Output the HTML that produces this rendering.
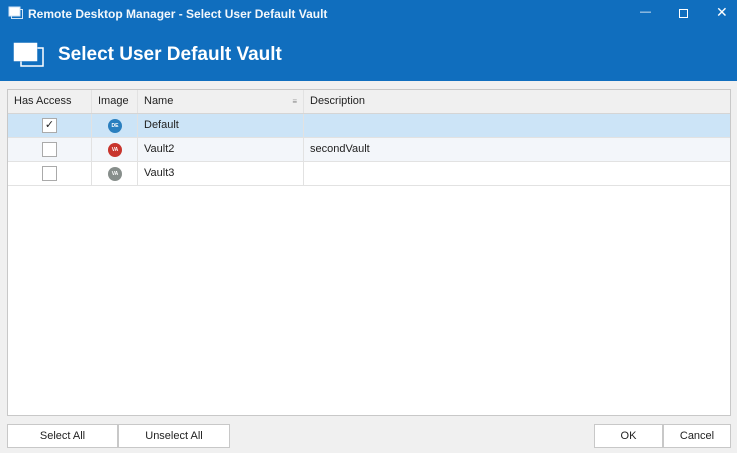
<!DOCTYPE html><html><head><style>
body{margin:0;width:737px;height:453px;background:#f0f0f0;font-family:"Liberation Sans",sans-serif;font-size:11px;color:#222;position:relative;overflow:hidden}
.top{position:absolute;left:0;top:0;width:737px;height:81px;background:#106ebe}
.t{position:absolute;color:#fff}
.grid{position:absolute;left:7px;top:89px;width:722px;height:325px;background:#fff;border:1px solid #c8c8c8}
.row{position:absolute;left:0;width:722px;height:23px;border-bottom:1px solid #e2e2e2}
.c{position:absolute;top:0;height:23px;line-height:23px;border-right:1px solid #e2e2e2;box-sizing:border-box;padding-left:6px}
.cb{position:absolute;left:34px;top:4px;width:13px;height:13px;border:1px solid #aaa;background:#fff;font-size:11px;line-height:13px;text-align:center}
.dot{position:absolute;left:16px;top:5px;width:14px;height:14px;border-radius:50%;color:#fff;font-size:5px;line-height:14px;text-align:center;font-weight:bold}
.btn{position:absolute;top:424px;height:22px;border:1px solid #c8c8c8;background:#fff;line-height:22px;text-align:center;font-size:11px}
</style></head><body>
<div class="top"></div>
<svg style="position:absolute;left:8px;top:6px" width="16" height="14"><rect x="3.5" y="3.5" width="11" height="9" fill="none" stroke="#cfe3f5"/><rect x="1" y="1" width="11" height="9" fill="#fff" stroke="#cfe3f5"/></svg>
<div class="t" style="left:28px;top:7px;font-size:12px;font-weight:bold;opacity:.95">Remote Desktop Manager - Select User Default Vault</div>
<div class="t" style="left:640px;top:6px;font-size:11px">&#8212;</div>
<div style="position:absolute;left:679px;top:9px;width:7px;height:7px;border:1px solid #fff"></div>
<div class="t" style="left:716px;top:4px;font-size:14px">&#x2715;</div>
<svg style="position:absolute;left:13px;top:42px" width="32" height="26"><rect x="8" y="6" width="22" height="18" fill="none" stroke="#fff" stroke-width="1.5"/><rect x="1" y="1" width="23" height="18" fill="#fff" stroke="#106ebe" stroke-width="1"/><rect x="1.5" y="1.5" width="22" height="17" fill="none" stroke="#fff" stroke-width="1.5"/><rect x="4" y="4" width="17" height="12" fill="#fff"/></svg>
<div class="t" style="left:58px;top:44px;font-size:19px;font-weight:bold">Select User Default Vault</div>
<div class="grid">
<div class="row" style="top:0;background:#f0f0f0;border-bottom:1px solid #d5d5d5">
<div class="c" style="left:0;width:84px">Has Access</div><div class="c" style="left:84px;width:46px">Image</div><div class="c" style="left:130px;width:166px">Name<span style="position:absolute;right:6px;font-size:8px;color:#888">&#8801;</span></div><div class="c" style="left:296px;width:426px;border:0">Description</div></div>
<div class="row" style="top:24px;background:#cce4f7">
<div class="c" style="left:0;width:84px"><div class="cb">&#10003;</div></div><div class="c" style="left:84px;width:46px"><div class="dot" style="background:#2a7fbf">DE</div></div><div class="c" style="left:130px;width:166px">Default</div></div>
<div class="row" style="top:48px;background:#f3f6fa">
<div class="c" style="left:0;width:84px"><div class="cb"></div></div><div class="c" style="left:84px;width:46px"><div class="dot" style="background:#c8352d">VA</div></div><div class="c" style="left:130px;width:166px">Vault2</div><div class="c" style="left:296px;width:426px;border:0">secondVault</div></div>
<div class="row" style="top:72px">
<div class="c" style="left:0;width:84px"><div class="cb"></div></div><div class="c" style="left:84px;width:46px"><div class="dot" style="background:#878e8b">VA</div></div><div class="c" style="left:130px;width:166px">Vault3</div></div>
</div>
<div class="btn" style="left:7px;width:109px">Select All</div>
<div class="btn" style="left:118px;width:110px">Unselect All</div>
<div class="btn" style="left:594px;width:67px">OK</div>
<div class="btn" style="left:663px;width:66px">Cancel</div>
</body></html>
